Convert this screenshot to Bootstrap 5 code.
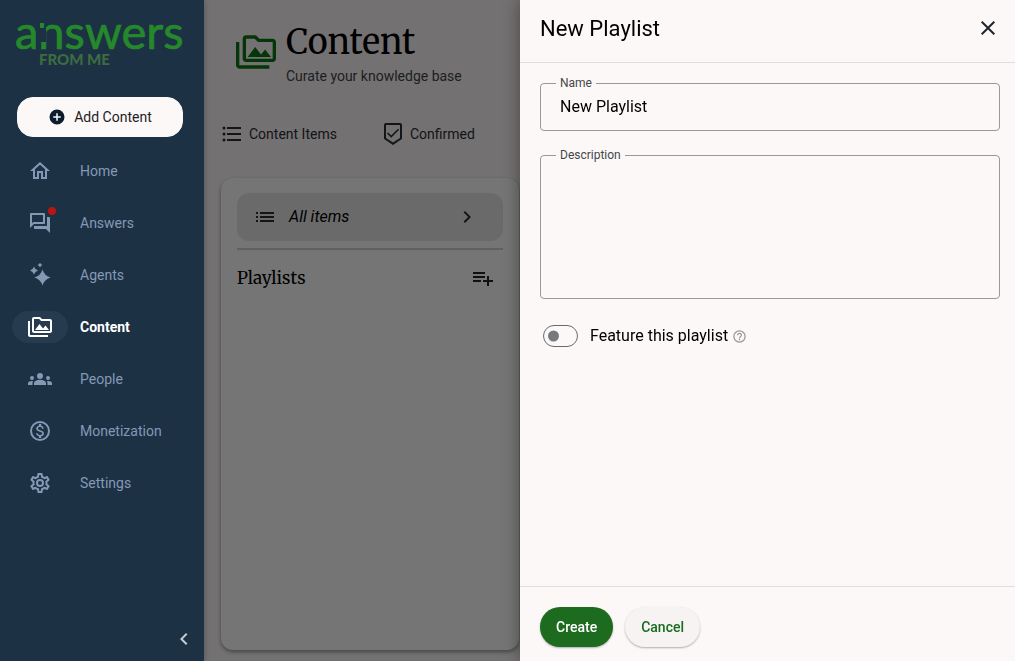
<!DOCTYPE html>
<html lang="en">
<head>
<meta charset="utf-8">
<meta name="viewport" content="width=device-width, initial-scale=1">
<title>New Playlist</title>
<link href="https://cdn.jsdelivr.net/npm/bootstrap@5.3.0/dist/css/bootstrap.min.css" rel="stylesheet">
<style>
  body { font-family: Roboto, "Liberation Sans", sans-serif; font-size: 14px; line-height: 20px; background: #fcf7f8; color: #000; }
  svg { display: block; fill: currentColor; flex-shrink: 0; }
  .sidebar { width: 204px; background: #1d3145; color: #8499b4; z-index: 3; box-shadow: 0 0 6px rgba(0,0,0,.3); }
  .logo { padding-left: 12px; height: 97px; }
  .btn-add { height: 40px; margin: 0 21px 0 17px; border-radius: 16px; background: #fcf8f7; color: #1c2126; font-size: 14px; border: 1px solid #fcf8f7; }
  .btn-add svg { color: #0a1c30; }
  .side-link { height: 52px; padding-left: 12px; gap: 12px; color: #8499b4; font-size: 14px; text-decoration: none; }
  .side-link .pill { width: 56px; height: 32px; border-radius: 16px; }
  .side-link.active { color: #fff; font-weight: 700; }
  .side-link.active .pill { background: #273b50; }
  .dot { width: 8px; height: 8px; background: #b91515; top: 0; right: 12px; }
  .collapse-btn { color: #c3cbd4; margin: 0 8px 10px 0; }
  .shade { background: rgba(0,0,0,.54); inset: 0; z-index: 2; }
  .content-head { padding: 20px 0 0 28px; gap: 6px; color: #0c7616; }
  .content-head svg { margin-bottom: 2px; }
  .page-title { font: 400 34px/44px Merriweather, "Noto Serif", "DejaVu Serif", "Liberation Serif", serif; color: #000; }
  .subtitle { color: #41464b; margin-top: 2px; }
  .tab-row { padding: 36px 0 32px 16px; gap: 44px; }
  .tab-link { color: #2b2f33; text-decoration: none; gap: 5px; height: 24px; }
  .panel { width: 298px; margin: 0 0 11px 17px; padding: 15px 16px; background: #fff; border-radius: 12px; box-shadow: 0 2px 4px rgba(0,0,0,.4); }
  .all-items { height: 48px; padding: 0 24px 0 16px; border-radius: 12px; background: #e8e8e8; border: 0; font-size: 16px; color: #000; }
  .all-items svg { color: #2b2f33; }
  .rule { height: 2px; background: #d2d2d2; margin: 7px 0 16px; }
  .section-title { font: 400 17px/24px Merriweather, "Noto Serif", "DejaVu Serif", "Liberation Serif", serif; }
  .drawer.offcanvas { --bs-offcanvas-width: 495px; background: #fcf8f7; border: 0; color: #000; box-shadow: 0 0 16px rgba(0,0,0,.4); }
  .drawer-head { height: 63px; padding: 0 15px 6px 20px; border-bottom: 1px solid #dedede; }
  .drawer-head h2 { font-size: 22px; line-height: 30px; font-weight: 400; padding-top: 2px; }
  .drawer-body { padding: 20px 15px 20px 20px; }
  .field { margin-bottom: 24px; }
  .field label { position: absolute; top: -10px; left: 16px; padding: 0 4px; background: #fcf8f7; font-size: 12px; line-height: 20px; color: #44474a; }
  .field .form-control { height: 48px; border: 1px solid #999; border-radius: 4px; background: transparent; padding: 0 19px 2px; font-size: 16px; color: #000; resize: none; }
  .field textarea.form-control { height: 144px; padding: 16px 19px; display: block; }
  .feature { padding: 2px 0 0 3px; gap: 12px; font-size: 16px; line-height: 22px; }
  .feature .form-check-input { width: 35px; height: 22px; margin: 0; border: 1px solid #686c72; border-radius: 11px; background-color: transparent; background-size: 20px 20px; background-position: left center;
    background-image: url("data:image/svg+xml,%3Csvg xmlns='http://www.w3.org/2000/svg' viewBox='0 0 20 20'%3E%3Ccircle cx='9.500' cy='10' r='5.500' fill='%23767a80'/%3E%3C/svg%3E"); }
  .feature svg { color: #999; }
  .drawer-foot { height: 75px; padding: 6px 20px 0; gap: 12px; border-top: 1px solid #dedede; }
  .btn-round { height: 40px; border-radius: 20px; padding: 0 16px; font-size: 14px; font-weight: 500; border: 0; box-shadow: 0 1px 2px rgba(0,0,0,.3); }
  .btn-create, .btn-create:hover { background: #1d6b1e; color: #fff; }
  .btn-cancel, .btn-cancel:hover { background: #f6f3f2; color: #176c22; }
</style>
</head>
<body>
<svg class="d-none" aria-hidden="true">
  <symbol id="i-media" viewBox="0 0 24 24"><path d="M2 6H0v14c0 1.100.9 2 2 2h18v-2H2V6zm5 9h14l-3.500-4.500-2.500 3.010L11.500 9zM22 4h-8l-2-2H6c-1.100 0-1.990.9-1.990 2L4 16c0 1.100.9 2 2 2h16c1.100 0 2-.9 2-2V6c0-1.100-.9-2-2-2zm0 12H6V4h5.170l1.410 1.410.59.59H22v10z"/></symbol>
</svg>
<div class="d-flex vh-100 overflow-hidden">
  <aside class="sidebar d-flex flex-column flex-shrink-0">
    <div class="logo">
      <svg width="184" height="72" role="img" aria-label="answers from me">
        <text x="3" y="49" font-family="Lato" font-size="47" fill="#25892b" stroke="#25892b" stroke-width=".7">answers</text>
        <path fill="#1d3145" d="M26 25h8v17h-8z"/>
        <path fill="#25892b" d="M28 23h4v5h-4z"/>
        <text x="27" y="65" font-family="Lato" font-weight="900" font-size="15" fill="#3c6c40">FROM ME</text>
      </svg>
    </div>
    <button class="btn btn-add d-flex align-items-center justify-content-center gap-2" type="button">
      <svg width="18" height="18" viewBox="0 0 24 24"><path d="M12 2a10 10 0 1 0 0 20 10 10 0 0 0 0-20zm5 11h-4v4h-2v-4H7v-2h4V7h2v4h4z"/></svg>
      Add Content
    </button>
    <nav class="d-flex flex-column mt-2">
      <a class="side-link d-flex align-items-center" href="#"><span class="pill d-flex align-items-center justify-content-center"><svg width="24" height="24" viewBox="0 0 24 24"><path d="m12 5.690 5 4.500V18h-2v-6H9v6H7v-7.810l5-4.500M12 3 2 12h3v8h6v-6h2v6h6v-8h3L12 3z"/></svg></span>Home</a>
      <a class="side-link d-flex align-items-center" href="#"><span class="pill d-flex align-items-center justify-content-center position-relative"><svg width="24" height="24" viewBox="0 0 24 24"><path d="M15 4v7H5.170L4 12.170V4h11m1-2H3c-.55 0-1 .45-1 1v14l4-4h10c.55 0 1-.45 1-1V3c0-.55-.45-1-1-1zm5 4h-2v9H6v2c0 .55.45 1 1 1h11l4 4V7c0-.55-.45-1-1-1z"/></svg><span class="dot position-absolute rounded-circle"></span></span>Answers</a>
      <a class="side-link d-flex align-items-center" href="#"><span class="pill d-flex align-items-center justify-content-center"><svg width="24" height="24" viewBox="0 0 24 24"><path d="M14.500 6.500q1.800 6.200 8 8-6.200 1.800-8 8-1.800-6.200-8-8 6.200-1.800 8-8zM6 3.500q.9 3.100 4 4-3.100.9-4 4-.9-3.100-4-4 3.100-.9 4-4zM12-.5q.6 2 2.500 2.500-1.900.6-2.500 2.500Q11.400 2.600 9.500 2 11.400 1.500 12-.5z"/></svg></span>Agents</a>
      <a class="side-link active d-flex align-items-center" href="#" aria-current="page"><span class="pill d-flex align-items-center justify-content-center"><svg width="24" height="24"><use href="#i-media"/></svg></span>Content</a>
      <a class="side-link d-flex align-items-center" href="#"><span class="pill d-flex align-items-center justify-content-center"><svg width="24" height="24" viewBox="0 0 24 24"><path d="M12 12.750c1.630 0 3.070.39 4.240.9 1.080.48 1.760 1.560 1.760 2.730V18H6v-1.610c0-1.180.68-2.260 1.760-2.730 1.170-.52 2.610-.91 4.240-.91zM4 13a2 2 0 1 0 0-4 2 2 0 0 0 0 4zm1.130 1.100A6.950 6.950 0 0 0 4 14c-.99 0-1.930.21-2.780.58A2.010 2.010 0 0 0 0 16.430V18h4.500v-1.610c0-.83.23-1.610.63-2.290zM20 13a2 2 0 1 0 0-4 2 2 0 0 0 0 4zm4 3.430c0-.81-.48-1.530-1.220-1.850a6.950 6.950 0 0 0-3.910-.48c.4.680.63 1.460.63 2.290V18H24v-1.570zM12 6a3 3 0 1 1 0 6 3 3 0 0 1 0-6z"/></svg></span>People</a>
      <a class="side-link d-flex align-items-center" href="#"><span class="pill d-flex align-items-center justify-content-center"><svg width="24" height="24" viewBox="0 0 24 24"><path d="M12 2a10 10 0 1 0 0 20 10 10 0 0 0 0-20zm0 18a8 8 0 1 1 0-16 8 8 0 0 1 0 16zm.31-8.860c-1.770-.45-2.340-.94-2.340-1.670 0-.84.79-1.430 2.100-1.430 1.380 0 1.900.66 1.940 1.640h1.710c-.05-1.340-.87-2.570-2.490-2.970V5H10.900v1.690c-1.510.32-2.720 1.300-2.720 2.810 0 1.790 1.490 2.690 3.660 3.210 1.950.46 2.340 1.150 2.340 1.870 0 .53-.39 1.390-2.100 1.390-1.600 0-2.230-.72-2.320-1.640H8.040c.1 1.700 1.360 2.660 2.860 2.970V19h2.340v-1.670c1.520-.29 2.720-1.160 2.730-2.770-.01-2.200-1.900-2.960-3.660-3.420z"/></svg></span>Monetization</a>
      <a class="side-link d-flex align-items-center" href="#"><span class="pill d-flex align-items-center justify-content-center"><svg width="24" height="24" viewBox="0 0 24 24"><path d="M19.430 12.980c.04-.32.07-.64.07-.98 0-.34-.03-.66-.07-.98l2.110-1.650c.19-.15.24-.42.12-.64l-2-3.460c-.09-.16-.26-.25-.44-.25-.06 0-.12.01-.17.03l-2.490 1c-.52-.4-1.080-.73-1.690-.98l-.38-2.650C14.460 2.180 14.250 2 14 2h-4c-.25 0-.46.18-.49.42l-.38 2.650c-.61.25-1.170.59-1.690.98l-2.490-1c-.06-.02-.12-.03-.18-.03-.17 0-.34.09-.43.25l-2 3.460c-.13.22-.07.49.12.64l2.110 1.650c-.04.32-.07.65-.07.98 0 .33.03.66.07.98l-2.110 1.650c-.19.15-.24.42-.12.64l2 3.460c.09.16.26.25.44.25.06 0 .12-.01.17-.03l2.490-1c.52.4 1.080.73 1.690.98l.38 2.650c.03.24.24.42.49.42h4c.25 0 .46-.18.49-.42l.38-2.650c.61-.25 1.170-.59 1.690-.98l2.490 1c.06.02.12.03.18.03.17 0 .34-.09.43-.25l2-3.460c.12-.22.07-.49-.12-.64l-2.110-1.650zm-1.980-1.710c.04.31.05.52.05.73 0 .21-.02.43-.05.73l-.14 1.130.89.7 1.080.84-.7 1.210-1.270-.51-1.040-.42-.9.68c-.43.32-.84.56-1.250.73l-1.060.43-.16 1.130-.2 1.350h-1.400l-.19-1.350-.16-1.130-1.060-.43c-.43-.18-.83-.41-1.230-.71l-.91-.7-1.060.43-1.270.51-.7-1.210 1.080-.84.89-.7-.14-1.130c-.03-.31-.05-.54-.05-.74s.02-.43.05-.73l.14-1.130-.89-.7-1.080-.84.7-1.210 1.270.51 1.040.42.9-.68c.43-.32.84-.56 1.250-.73l1.060-.43.16-1.130.2-1.350h1.390l.19 1.350.16 1.130 1.060.43c.43.18.83.41 1.230.71l.91.7 1.060-.43 1.270-.51.7 1.210-1.070.85-.89.7.14 1.130zM12 8a4 4 0 1 0 0 8 4 4 0 0 0 0-8zm0 6a2 2 0 1 1 0-4 2 2 0 0 1 0 4z"/></svg></span>Settings</a>
    </nav>
    <button class="collapse-btn btn p-0 border-0 mt-auto align-self-end" type="button" aria-label="Collapse menu"><svg width="24" height="24" viewBox="0 0 24 24"><path d="M15.410 7.410 14 6l-6 6 6 6 1.410-1.410L10.830 12z"/></svg></button>
  </aside>

  <main class="flex-grow-1 position-relative d-flex flex-column">
    <header class="content-head d-flex align-items-center">
      <svg width="48" height="48" viewBox="0 0 24 24"><use href="#i-media" x="2" y="2" width="20" height="20"/></svg>
      <div><h1 class="page-title mb-0">Content</h1><div class="subtitle">Curate your knowledge base</div></div>
    </header>
    <nav class="tab-row d-flex">
      <a class="tab-link d-flex align-items-center" href="#"><svg width="24" height="24" viewBox="0 0 24 24"><path d="M4 10.500a1.500 1.500 0 1 0 0 3 1.500 1.500 0 0 0 0-3zm0-6a1.500 1.500 0 1 0 0 3 1.500 1.500 0 0 0 0-3zm0 12a1.500 1.500 0 1 0 0 3 1.500 1.500 0 0 0 0-3zM7 19h14v-2H7v2zm0-6h14v-2H7v2zm0-8v2h14V5H7z"/></svg>Content Items</a>
      <a class="tab-link d-flex align-items-center" href="#"><svg width="24" height="24" viewBox="0 0 24 24"><path d="M19 1H5c-1.100 0-1.990.9-1.990 2L3 15.930c0 .69.35 1.300.88 1.660L12 23l8.110-5.410c.53-.36.88-.97.88-1.660L21 3c0-1.100-.9-2-2-2zm0 15-7 4.600L5 16V3h14v13z"/><path d="m6.600 11 3.600 3.600 7.400-7.400" fill="none" stroke="currentColor" stroke-width="1.600"/></svg>Confirmed</a>
    </nav>
    <section class="panel flex-grow-1">
      <button class="all-items d-flex align-items-center w-100" type="button"><svg width="24" height="24" viewBox="0 0 24 24"><path d="M3 13h2v-2H3v2zm0 4h2v-2H3v2zm0-8h2V7H3v2zm4 4h14v-2H7v2zm0 4h14v-2H7v2zM7 7v2h14V7H7z"/></svg><em class="ms-2 ps-1 me-auto">All items</em><svg width="24" height="24" viewBox="0 0 24 24"><path d="M8.590 16.590 10 18l6-6-6-6-1.410 1.410L13.170 12z"/></svg></button>
      <div class="rule"></div>
      <div class="d-flex justify-content-between align-items-center">
        <h2 class="section-title mb-0">Playlists</h2>
        <button class="btn p-0 border-0 me-2" type="button" aria-label="Add playlist"><svg width="24" height="24" viewBox="0 0 24 24"><path d="M14 10H2v2h12v-2zm0-4H2v2h12V6zm4 8v-4h-2v4h-4v2h4v4h2v-4h4v-2h-4zM2 16h8v-2H2v2z"/></svg></button>
      </div>
    </section>
    <div class="shade position-absolute"></div>
  </main>
</div>

<div class="drawer offcanvas offcanvas-end show" tabindex="-1" data-bs-backdrop="false" data-bs-scroll="true" role="dialog" aria-labelledby="drawerTitle">
  <div class="drawer-head d-flex align-items-center justify-content-between">
    <h2 id="drawerTitle" class="mb-0">New Playlist</h2>
    <button class="btn p-0 border-0" type="button" aria-label="Close"><svg width="24" height="24" viewBox="0 0 24 24"><path d="M19 6.410 17.590 5 12 10.590 6.410 5 5 6.410 10.590 12 5 17.590 6.410 19 12 13.410 17.590 19 19 17.590 13.410 12z"/></svg></button>
  </div>
  <form id="playlistForm" class="drawer-body flex-grow-1">
    <div class="field position-relative"><input class="form-control" id="name" value="New Playlist"><label for="name">Name</label></div>
    <div class="field position-relative"><textarea class="form-control" id="description"></textarea><label for="description">Description</label></div>
    <div class="feature form-switch d-flex align-items-center">
      <input class="form-check-input" type="checkbox" role="switch" id="feature">
      <label class="d-flex align-items-center gap-1" for="feature">Feature this playlist
        <svg width="15" height="15" viewBox="0 0 24 24"><path d="M11 18h2v-2h-2v2zm1-16a10 10 0 1 0 0 20 10 10 0 0 0 0-20zm0 18a8 8 0 1 1 0-16 8 8 0 0 1 0 16zm0-14a4 4 0 0 0-4 4h2a2 2 0 1 1 4 0c0 2-3 1.750-3 5h2c0-2.250 3-2.500 3-5a4 4 0 0 0-4-4z"/></svg></label>
    </div>
  </form>
  <div class="drawer-foot d-flex align-items-center">
    <button class="btn btn-round btn-create" type="submit" form="playlistForm">Create</button>
    <button class="btn btn-round btn-cancel" type="button">Cancel</button>
  </div>
</div>
<script src="https://cdn.jsdelivr.net/npm/bootstrap@5.3.0/dist/js/bootstrap.bundle.min.js"></script>
</body>
</html>
